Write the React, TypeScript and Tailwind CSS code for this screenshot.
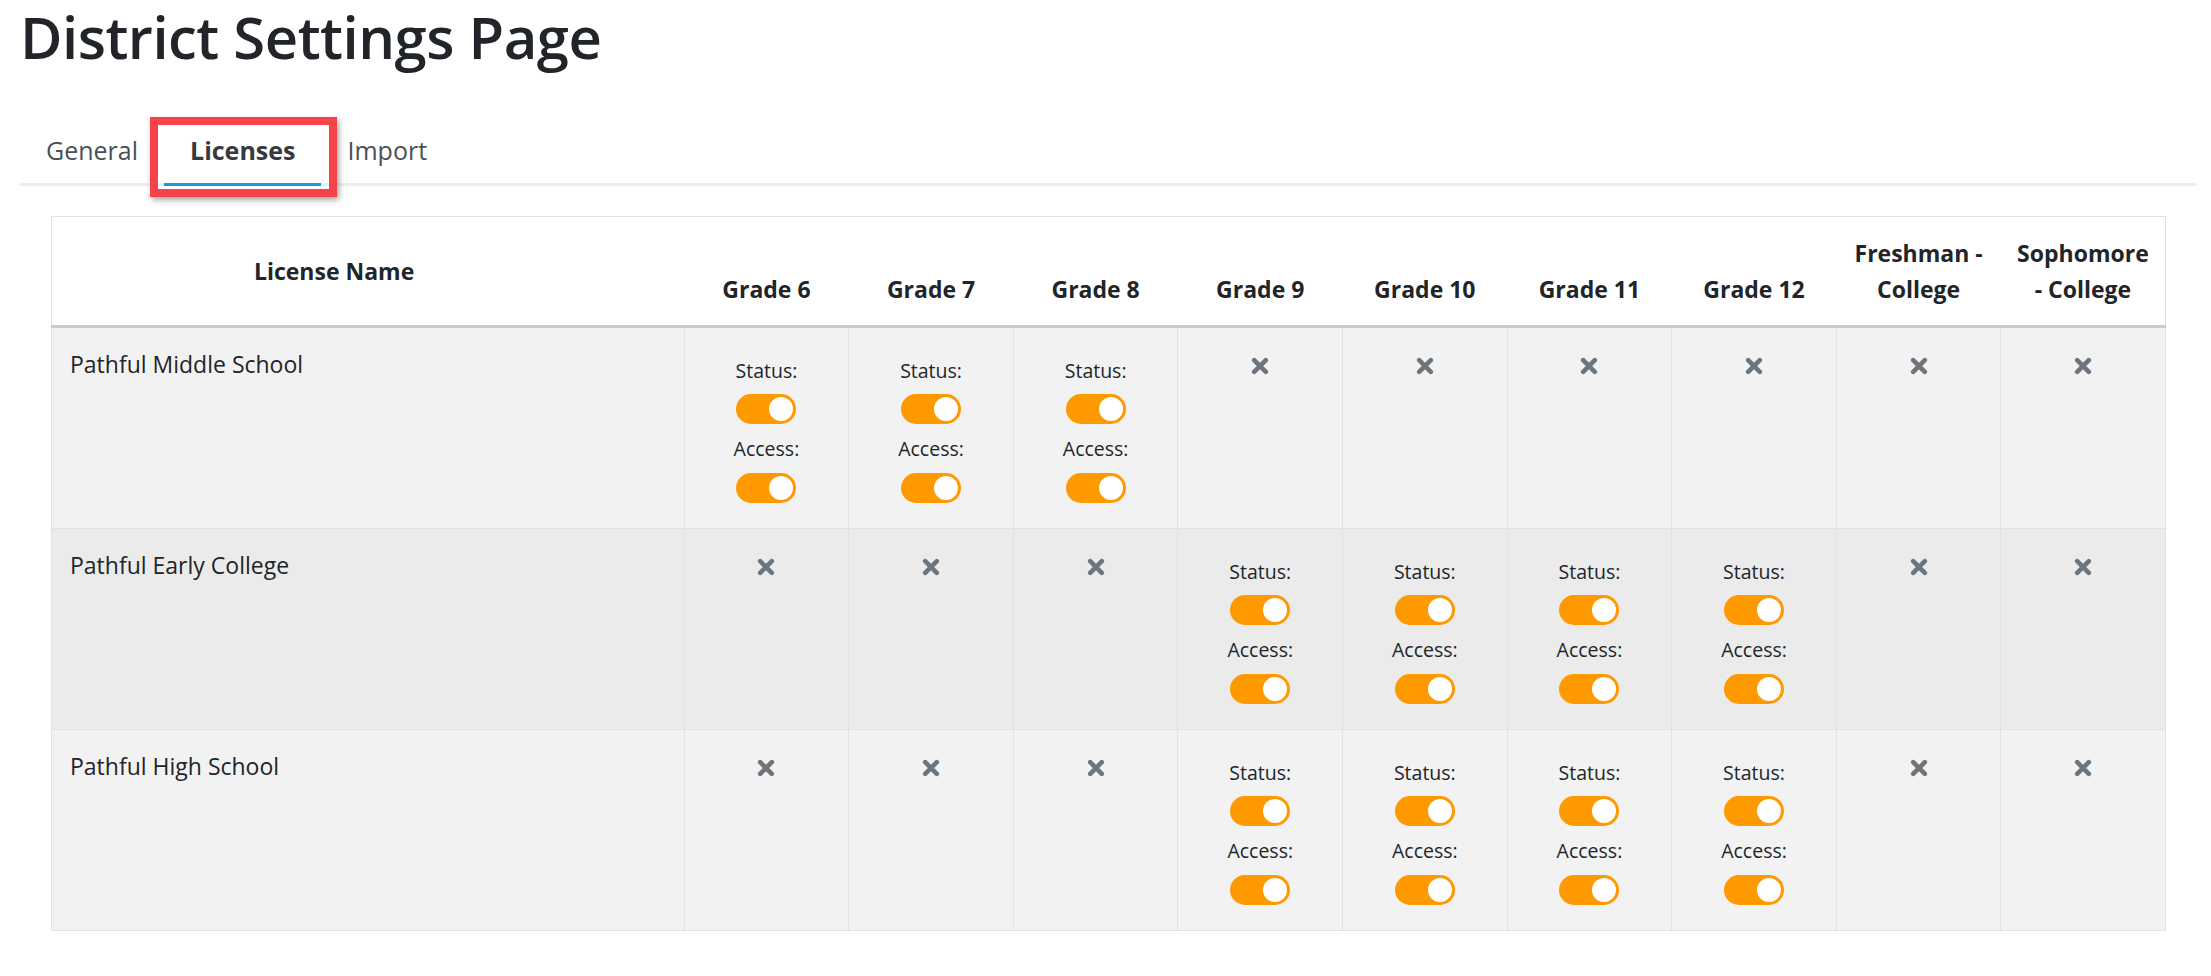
import React from "react";

type Cell = "toggle" | "none";

// header labels, split where the column wraps them
const grades: string[][] = [
  ["Grade 6"],
  ["Grade 7"],
  ["Grade 8"],
  ["Grade 9"],
  ["Grade 10"],
  ["Grade 11"],
  ["Grade 12"],
  ["Freshman -", "College"],
  ["Sophomore", "- College"],
];

const licenses: { name: string; cells: Cell[]; bg: string }[] = [
  {
    name: "Pathful Middle School",
    cells: ["toggle", "toggle", "toggle", "none", "none", "none", "none", "none", "none"],
    bg: "bg-[#f2f2f2]",
  },
  {
    name: "Pathful Early College",
    cells: ["none", "none", "none", "toggle", "toggle", "toggle", "toggle", "none", "none"],
    bg: "bg-[#ebebeb]",
  },
  {
    name: "Pathful High School",
    cells: ["none", "none", "none", "toggle", "toggle", "toggle", "toggle", "none", "none"],
    bg: "bg-[#f2f2f2]",
  },
];

const Switch = () => (
  <div className="flex h-[30px] w-[60px] items-center justify-end rounded-full bg-[#ff9900] pr-[3px]">
    <div className="h-[24px] w-[24px] rounded-full bg-white" />
  </div>
);

const Times = () => (
  <svg width="18" height="18" viewBox="0 0 18 18" className="inline-block align-middle">
    <path
      d="M3.2 3.2 L14.8 14.8 M14.8 3.2 L3.2 14.8"
      stroke="#6c757d"
      strokeWidth="4.6"
      strokeLinecap="round"
      fill="none"
    />
  </svg>
);

const SwitchCell = () => (
  <div className="flex flex-col items-center pt-[9px] pb-[7px]">
    <span className="text-[19.5px] leading-[31.5px]">Status:</span>
    <div className="mt-[8px]">
      <Switch />
    </div>
    <span className="mt-[9px] text-[19.5px] leading-[31.5px]">Access:</span>
    <div className="mt-[8px]">
      <Switch />
    </div>
  </div>
);

const App = () => {
  return (
    <div className="min-h-screen bg-white font-['Open_Sans',sans-serif] text-[#212529]">
      <div className="pl-[20px] pr-[15px] pt-px">
        {/* Page title */}
        <h1 className="mb-[45px] text-[58px] font-semibold leading-[72px] tracking-[-0.5px]">
          District Settings Page
        </h1>

        {/* Tabs */}
        <nav className="flex border-b-[3px] border-[#eeeeee]">
          <a className="px-[26px] py-[12px] text-[25px] leading-[40.5px] text-[#495057]">General</a>
          <a className="relative -mb-[3px] border-b-[3px] border-[#0a9de3] px-[26px] py-[12px] text-[25px] font-bold leading-[40.5px] text-[#343a40]">
            Licenses
            <span className="pointer-events-none absolute -top-[1px] -right-[16px] -bottom-[14px] -left-[14px] border-[8px] border-[#f4434a] shadow-[2px_3px_6px_rgba(0,0,0,0.35)]" />
          </a>
          <a className="px-[26px] py-[12px] text-[25px] leading-[40.5px] text-[#495057]">Import</a>
        </nav>

        {/* Licenses table */}
        <div className="mt-[30px] ml-[31px] mr-[30px]">
          <table className="w-full table-fixed border-collapse border border-[#dee2e6]">
            <colgroup>
              <col />
              {grades.map((g) => (
                <col key={g.join(" ")} className="w-[164.6px]" />
              ))}
            </colgroup>
            <thead>
              <tr className="bg-white">
                <th className="border-b-[3px] border-[#cbcbcb] py-[18px] pl-[18px] pr-[86px] text-center align-middle text-[23px] font-bold leading-[36px]">
                  License Name
                </th>
                {grades.map((g) => (
                  <th
                    key={g.join(" ")}
                    className="border-b-[3px] border-[#cbcbcb] px-[10px] py-[18px] text-center align-bottom text-[23px] font-bold leading-[36px]"
                  >
                    {g.map((line) => (
                      <div key={line}>{line}</div>
                    ))}
                  </th>
                ))}
              </tr>
            </thead>
            <tbody>
              {licenses.map((lic) => (
                <tr key={lic.name} className={lic.bg}>
                  <td className="border border-[#dee2e6] p-[18px] align-top text-[23px] leading-[36px]">
                    {lic.name}
                  </td>
                  {lic.cells.map((c, i) => (
                    <td
                      key={i}
                      className="border border-[#dee2e6] p-[18px] text-center align-top text-[24px] leading-[36px]"
                    >
                      {c === "toggle" ? <SwitchCell /> : <Times />}
                    </td>
                  ))}
                </tr>
              ))}
            </tbody>
          </table>
        </div>
      </div>
    </div>
  );
};

export default App;
